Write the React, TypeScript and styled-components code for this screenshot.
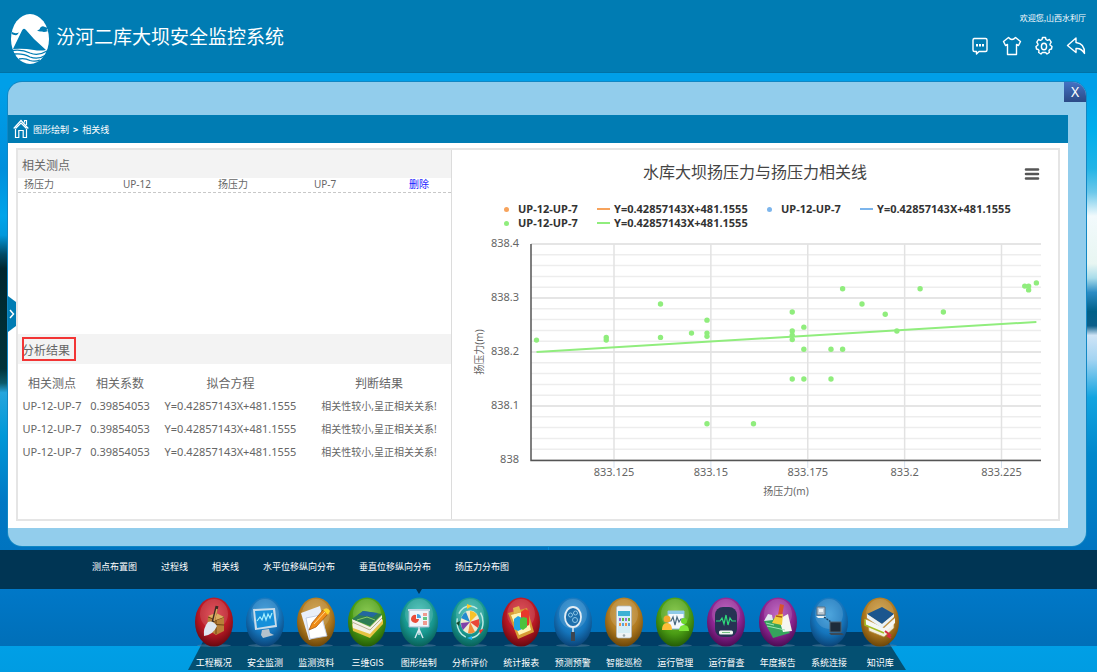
import React from "react";
import styled, { createGlobalStyle } from "styled-components";

const latin = '"Noto Sans", "Noto Sans CJK SC", sans-serif';
const cjk = '"Noto Sans CJK SC", "Noto Sans", sans-serif';

const GlobalStyle = createGlobalStyle`
  * { box-sizing: border-box; }
  body { margin: 0; font-family: ${cjk}; color: #666; background: #0075c2; }
  button { padding: 0; border: 0; background: none; font: inherit; color: inherit; cursor: pointer; }
  a { color: inherit; text-decoration: none; }
  h1, h2, p { margin: 0; font-weight: 400; }
  svg { display: block; }
`;

const Page = styled.div`
  min-height: 100vh;
  display: flex;
  flex-direction: column;
`;

/* ---------- header ---------- */

const Header = styled.header`
  height: 73px;
  padding: 12px 11px 8px 10px;
  display: flex;
  justify-content: space-between;
  background: #007cb3;
  border-bottom: 1px solid #0072a6;
  color: #fff;
`;

const Brand = styled.div`
  display: flex;
  align-items: flex-start;
  gap: 6px;
`;

const SystemName = styled.h1`
  font-size: 19px;
  line-height: 48px;
`;

const UserArea = styled.div`
  display: flex;
  flex-direction: column;
  align-items: flex-end;
  gap: 12px;
`;

const Welcome = styled.p`
  font-size: 8px;
  line-height: 12px;
`;

const Tools = styled.div`
  display: flex;
  gap: 12px;
`;

const ToolButton = styled.button`
  width: 20px;
  height: 20px;
`;

/* ---------- window ---------- */

const Stage = styled.main`
  flex: 1;
  display: flex;
  padding: 9px 11px 4px 8px;
  background:
    linear-gradient(#009fe8 0, #009fe8 3%, #008fdc 20%, #00a4ea 30%, #0098dc 34%, #004a66 38%, #00262e 41%, #00333a 62%, #0b5a6a 65%, #25a5dd 67%, #0098d8 76%, #0078c4 90%, #0074c0 100%) left / 50% 100% no-repeat,
    linear-gradient(#009fe8 0, #009fe8 3%, #00aeec 12%, #22b4e6 20%, #6cc8ea 25%, #f2fafc 30%, #e8f6f2 40%, #a8dcea 43%, #2b8cc4 46%, #006088 50%, #0b5f8a 53%, #cfe4f6 55%, #a4d4f2 60%, #12a4e0 68%, #0088cc 80%, #0074c0 100%) right / 50% 100% no-repeat,
    #009fe8;
`;

const Window = styled.section`
  flex: 1;
  display: flex;
  flex-direction: column;
  padding: 0 18px 18px 0;
  border-radius: 14px;
  background: #92cdec;
  box-shadow: 0 0 0 1px #1187c4;
  position: relative;
`;

const TitleBar = styled.div`
  height: 33px;
`;

const CloseButton = styled.button`
  position: absolute;
  top: 0;
  right: 0;
  width: 22px;
  height: 20px;
  border-radius: 0 14px 0 0;
  background: linear-gradient(#4472c4, #2b4a86);
  color: #fff;
  font-family: ${latin};
  font-size: 14px;
  line-height: 20px;
`;

const Crumbs = styled.nav`
  height: 28px;
  padding-left: 5px;
  display: flex;
  align-items: center;
  gap: 4px;
  background: #007cb3;
  color: #fff;
  font-size: 9px;
`;

const Separator = styled.span`
  font-weight: 700;
`;

const Body = styled.div`
  flex: 1;
  display: flex;
  padding: 5px 8px 7px;
  background: #fff;
  position: relative;
`;

const DrawerHandle = styled.button`
  position: absolute;
  left: 0;
  top: 153px;
  width: 8px;
  height: 36px;
`;

const Frame = styled.div`
  flex: 1;
  display: grid;
  grid-template-columns: 434fr 606fr;
  border: 2px solid #e5e5e5;
`;

const ListPanel = styled.div`
  display: flex;
  flex-direction: column;
  border-right: 1px solid #dcdcdc;
`;

const PanelHead = styled.h2<{ $tall?: boolean }>`
  height: ${(p) => (p.$tall ? 30 : 28)}px;
  padding: 0 4px;
  display: flex;
  align-items: center;
  background: #f3f3f3;
  font-size: 12px;
`;

const Marked = styled.span`
  height: 24px;
  padding-right: 6px;
  display: flex;
  align-items: center;
  outline: 2px solid #f23535;
  outline-offset: -2px;
`;

const PointRow = styled.div`
  display: grid;
  grid-template-columns: 99px 95px 96px 95px 1fr;
  padding-left: 6px;
  height: 15px;
  border-bottom: 1px dashed #c8c8c8;
  font-family: ${latin};
  font-size: 10px;
  line-height: 12px;
`;

const DeleteButton = styled.button`
  justify-self: start;
  height: 12px;
  color: #1a1aff;
`;

const Spacer = styled.div`
  flex: 1;
`;

const ResultArea = styled.div`
  height: 155px;
  padding-top: 8px;
`;

const ResultTable = styled.table`
  width: 100%;
  border-collapse: collapse;
  table-layout: fixed;
  text-align: center;
  font-family: ${latin};
  th, td { padding: 0; white-space: nowrap; }
  th { height: 22px; font-size: 12px; font-weight: 400; }
  td { height: 23px; font-size: 10px; line-height: 18px; }
  td:nth-child(-n + 3) { font-size: 11px; }
`;

/* ---------- chart ---------- */

const ChartPanel = styled.div`
  display: flex;
  flex-direction: column;
`;

const ChartHead = styled.div`
  display: grid;
  grid-template-columns: 1fr auto 1fr;
  align-items: center;
  padding: 9px 18px 0;
  line-height: 24px;
`;

const ChartTitle = styled.h2`
  grid-column: 2;
  font-size: 16px;
  color: #444;
`;

const MenuButton = styled.button`
  justify-self: end;
  padding-top: 6px;
`;

const Legend = styled.div`
  display: grid;
  grid-template-columns: 93px 170px 93px 1fr;
  padding: 19px 0 2px 52px;
`;

const LegendItem = styled.button<{ $line?: boolean }>`
  display: grid;
  grid-template-columns: ${(p) => (p.$line ? 17 : 14)}px auto;
  align-items: center;
  justify-content: start;
  height: 14px;
  color: #333;
  font-family: ${latin};
  font-size: 11px;
  font-weight: 700;
  line-height: 14px;
  white-space: nowrap;
`;

const Swatch = styled.span<{ $color: string; $line?: boolean }>`
  width: ${(p) => (p.$line ? 13 : 5)}px;
  height: ${(p) => (p.$line ? 2 : 5)}px;
  border-radius: ${(p) => (p.$line ? 0 : 3)}px;
  background: ${(p) => p.$color};
`;

const Plot = styled.svg`
  width: 100%;
  height: auto;
  font-family: ${latin};
  font-size: 11px;
  fill: #666;
`;

/* ---------- bottom ---------- */

const SubMenu = styled.nav`
  height: 39px;
  padding: 10px 0 0 92px;
  display: flex;
  gap: 24px;
  background: #003554;
  color: #fff;
  font-size: 9px;
  line-height: 14px;
  white-space: nowrap;
`;

const Dock = styled.footer`
  height: 83px;
  padding-right: 3px;
  background: linear-gradient(#0078c8, #006fb8 57px, #009fe6 57px, #009ce2 100%);
`;

const DockList = styled.nav`
  position: relative;
  width: 718px;
  max-width: 100%;
  height: 83px;
  margin: 0 auto;
  display: grid;
  grid-template-columns: repeat(14, 1fr);
`;

const DockShelf = styled.div`
  position: absolute;
  inset: 43px 0 2px;
  clip-path: polygon(20px 0, calc(100% - 24px) 0, 100% 100%, 0 100%);
  background: linear-gradient(#003d66 14px, #045072 14px);
`;

const DockItem = styled.a`
  position: relative;
  display: flex;
  flex-direction: column;
  align-items: center;
  gap: 9px;
  padding-top: 8px;
  color: #fff;
  font-size: 9px;
  line-height: 14px;
  white-space: nowrap;
`;

const ActiveMark = styled.span`
  position: absolute;
  top: 0;
  left: 50%;
  margin-left: -3px;
  border: 3px solid transparent;
  border-top: 5px solid #003554;
  border-bottom: 0;
`;

/* ---------- drawings ---------- */

const Logo = () => (
  <svg width="40" height="52" viewBox="0 0 40 52">
    <ellipse cx="20" cy="27" rx="19" ry="25" fill="#fff" />
    <path d="M3 37 L12 18.500 Q13.500 15.500 16 18 L24 27 L36 38 Q30 39 24 38 Q13 36 3 37Z" fill="#007cb3" />
    <path d="M2 20 Q5 22 9 20.500 L7 23 Q4 23.500 1.500 22Z M27 18 Q30 18 30 16 Q32 13 35 15 L38 16 L36.500 18 L38 19 Q34 20.500 32 19.500 Q29 20 27 18Z" fill="#007cb3" />
    <path d="M2 38.500 Q12 37 20 41 Q28 44.500 37 39 M4 42 Q13 41 20 45 Q28 48 35 43.500 M9 47 Q15 46 20 48.500 Q25 50 30 48" fill="none" stroke="#007cb3" strokeWidth="1.300" />
  </svg>
);

const stroke = { fill: "none", stroke: "#fff", strokeWidth: 1.4, strokeLinejoin: "round" as const };

const toolIcons: { label: string; art: React.ReactNode }[] = [
  {
    label: "消息",
    art: (
      <>
        <path {...stroke} d="M4 2.500H15.500Q17 2.500 17 4V14Q17 15.500 15.500 15.500H9L6.500 18V15.500H4.500Q3 15.500 3 14V4Q3 2.500 4.500 2.500Z" />
        <path d="M6 8h2v2.500H6zM9 8h2v2.500H9zM12 8h2v2.500H12z" fill="#fff" />
      </>
    ),
  },
  { label: "换肤", art: <path {...stroke} d="M6.500 1.500Q10 5.500 13.500 1.500L18.500 5.500L16.500 9.500L14.500 8.500V18.500H5.500V8.500L3.500 9.500L1.500 5.500Z" /> },
  {
    label: "设置",
    art: (
      <>
        <path {...stroke} d="M8.500 1.500H11.500L12 3.500L13.500 4.300L15.500 3.500L17.200 6.200L16 8.200V9L18 10.500L17.500 13L15.800 13.500L15 14.500L15.300 16.500L13 18L11.600 16.500H8.400L7 18L4.700 16.500L5 14.500L4.200 13.500L2.500 13L2 10.500L4 9V8.200L2.800 6.200L4.500 3.500L6.500 4.300L8 3.500Z" />
        <ellipse {...stroke} cx="10" cy="10.500" rx="2.600" ry="3.300" />
      </>
    ),
  },
  { label: "返回", art: <path {...stroke} d="M10 2L1.500 9.500L10 16.500V12.500Q15.500 12 18.500 17.500Q19 7.500 10 6.500Z" /> },
];

const HomeIcon = () => (
  <svg width="16" height="20" viewBox="0 0 16 20" fill="none" stroke="#fff" strokeWidth="1.200">
    <path d="M0.700 9.500L8 1.500L15.300 9.500M2.500 9.500L8 4L13.500 9.500M2.500 10V18.500H5.800V11.500H10.200V18.500H13.500V10M11.500 3.500V1.500H13.500V6" />
  </svg>
);

type Hue = "red" | "blue" | "gold" | "green" | "teal" | "purple";

const hues: Record<Hue, [string, string, string]> = {
  red: ["#dc3c46", "#b81824", "#680810"],
  blue: ["#3498d8", "#1575bc", "#0a4478"],
  gold: ["#d0a044", "#b07a20", "#6c4608"],
  green: ["#7cc43a", "#4a9c14", "#245c06"],
  teal: ["#44c4b8", "#189890", "#086058"],
  purple: ["#b854bc", "#8c2490", "#4c0c54"],
};

const Gradients = () => (
  <svg width="0" height="0" aria-hidden="true">
    <defs>
      {(Object.keys(hues) as Hue[]).map((h) => (
        <radialGradient key={h} id={`orb-${h}`} cx="50%" cy="35%" r="65%">
          <stop offset="0" stopColor={hues[h][0]} />
          <stop offset="0.600" stopColor={hues[h][1]} />
          <stop offset="1" stopColor={hues[h][2]} />
        </radialGradient>
      ))}
    </defs>
  </svg>
);

const HiddenDefs = styled.div`
  height: 0;
  overflow: hidden;
`;

const Orb = ({ hue, children }: { hue: Hue; children: React.ReactNode }) => (
  <svg width="40" height="50" viewBox="0 0 40 50">
    <ellipse cx="20" cy="48.500" rx="17" ry="1.500" fill="#5b86a4" opacity="0.500" />
    <ellipse cx="20" cy="25" rx="19" ry="24.500" fill={`url(#orb-${hue})`} />
    <ellipse cx="20" cy="17" rx="14" ry="15" fill="#fff" opacity="0.130" />
    {children}
  </svg>
);

const dockItems: { label: string; hue: Hue; active?: boolean; art: React.ReactNode }[] = [
  {
    label: "工程概况",
    hue: "red",
    art: (
      <>
        <path d="M14 20L22 16L30 20V34L22 38L13 32Z" fill="#b98038" />
        <path d="M14 20L22 23L30 20M22 23V37M14 27L30 28" stroke="#6f4212" fill="none" />
        <path d="M14 19L22 16L30 20L22 23Z" fill="#dcae62" />
        <path d="M23 9L19 25" stroke="#3b2a22" strokeWidth="3" />
        <path d="M23 12L20 24" stroke="#d9a45c" strokeWidth="1.500" />
        <path d="M14 25Q19 23 23 29Q19 38 10 39Q9 31 14 25Z" fill="#dfe6ef" />
      </>
    ),
  },
  {
    label: "安全监测",
    hue: "blue",
    art: (
      <>
        <path d="M8 12L30 11L32 30L10 33Z" fill="#c9dcea" />
        <path d="M10 14L28 13L30 28L12 31Z" fill="#1590da" />
        <path d="M12 24L15 20L17 23L19 17L21 23L23 17L25 21L27 16" stroke="#a5f0ff" fill="none" strokeWidth="1.200" />
        <path d="M17 33L24 32L25 36L29 38L18 41L16 38Z" fill="#b5c2cc" />
      </>
    ),
  },
  {
    label: "监测资料",
    hue: "gold",
    art: (
      <>
        <path d="M5 16L24 9L30 36L13 43Z" fill="#e9effa" />
        <path d="M10 21L25 18L31 39L14 42Z" fill="#fff" stroke="#b8c4dd" strokeWidth="0.800" />
        <path d="M16 26L27 13L32 17L20 30L13 33Z" fill="#f08c18" stroke="#9c5008" strokeWidth="0.700" />
        <path d="M27 13Q31 9 34 14L32 18Z" fill="#ffd628" />
        <path d="M18 27L29 15" stroke="#ffd88c" />
      </>
    ),
  },
  {
    label: "三维GIS",
    hue: "green",
    art: (
      <>
        <path d="M5 27L25 34L36 22V27L23 41L6 34Z" fill="#e6c344" />
        <path d="M5 22L23 30L35 18V24L23 37L6 31Z" fill="#f3f0e4" />
        <path d="M5 25L23 33L35 21" stroke="#b6b08e" fill="none" />
        <path d="M5 22L16 14L35 17L23 29Z" fill="#2c7c54" />
        <path d="M11 18L16 14L31 16L26 20Z" fill="#2367a0" />
        <path d="M10 23L20 20L28 23" stroke="#8ecb62" fill="none" />
      </>
    ),
  },
  {
    label: "图形绘制",
    hue: "teal",
    active: true,
    art: (
      <>
        <path d="M10 13H30V30H10Z" fill="#eef5fb" stroke="#9db8cc" />
        <path d="M9 12H31V14H9Z" fill="#c7d9e6" />
        <path d="M17 18A4 4 0 1 0 20 22H17Z" fill="#ea4c38" />
        <path d="M18 17A4 4 0 0 1 22 21H18Z" fill="#49a3dd" />
        <path d="M24 16H28V19H24ZM24 24H28V28H24Z" fill="#ef9a90" />
        <path d="M24 20H28V23H24Z" fill="#62c682" />
        <path d="M20 30V38M20 32L16 41M20 32L24 41" stroke="#d8e8ef" strokeWidth="1.400" />
      </>
    ),
  },
  {
    label: "分析评价",
    hue: "teal",
    art: (
      <>
        <ellipse cx="20" cy="25" rx="13" ry="16" fill="none" stroke="#bce9e4" strokeWidth="1.500" strokeDasharray="22 5" />
        <ellipse cx="20" cy="25" rx="9.500" ry="11.500" fill="#f2ead0" />
        <path d="M20 25L20 14A9 11 0 0 1 27 18Z" fill="#f7c22a" />
        <path d="M20 25L29 22A9 11 0 0 1 28 31Z" fill="#ea4738" />
        <path d="M20 25L25 35A9 11 0 0 1 18 36Z" fill="#f28d35" />
        <path d="M20 25L13 33A9 11 0 0 1 11 26Z" fill="#8140aa" />
        <path d="M20 25L11 21A9 11 0 0 1 16 15Z" fill="#238bd0" />
        <path d="M17 7L22 9L17 12Z" fill="#ffc92a" />
        <path d="M34 32L30 37L29 33Z" fill="#ed382c" />
        <path d="M22 43L17 41L22 39Z" fill="#25b3f0" />
        <path d="M6 26L9 29L10 24Z" fill="#164c2e" />
      </>
    ),
  },
  {
    label: "统计报表",
    hue: "red",
    art: (
      <>
        <path d="M7 16L26 11L33 35L17 42Z" fill="#d79c34" />
        <path d="M10 18L25 14L30 33L18 38Z" fill="#fff4b4" />
        <path d="M12 11L18 9L20 15L13 17Z" fill="#e2b84c" />
        <path d="M20 15L24 12L28 14V28L24 30L20 28Z" fill="#e8382c" />
        <path d="M13 22L17 19L21 21V32L17 34L13 32Z" fill="#24a4e2" />
        <path d="M19 22L22 20L26 21V30L22 33L19 31Z" fill="#4cc23c" />
      </>
    ),
  },
  {
    label: "预测预警",
    hue: "blue",
    art: (
      <>
        <ellipse cx="20" cy="20" rx="8" ry="10" fill="#1d6fac" stroke="#e3edf4" strokeWidth="1.800" />
        <circle cx="17.500" cy="18" r="2" fill="none" stroke="#8cc6e6" />
        <circle cx="22.500" cy="16" r="2" fill="none" stroke="#8cc6e6" />
        <circle cx="22" cy="23" r="2.500" fill="none" stroke="#8cc6e6" />
        <path d="M20 30V35" stroke="#dfe8ee" strokeWidth="1.500" />
        <path d="M20 35V44" stroke="#3d4650" strokeWidth="4" />
      </>
    ),
  },
  {
    label: "智能巡检",
    hue: "gold",
    art: (
      <>
        <rect x="12.500" y="9" width="15" height="32" rx="2" fill="#eef3f6" stroke="#aeb8bd" strokeWidth="0.700" />
        <path d="M14 14H26V36H14Z" fill="#d5eef6" />
        <path d="M14 14H26V19H14Z" fill="#3db1d4" />
        <path d="M15 21H17V24H15ZM21 21H23V24H21Z" fill="#9a6ad8" />
        <path d="M18 21H20V24H18ZM24 21H26V24H24Z" fill="#60b848" />
        <path d="M15 26H17V29H15ZM21 26H23V29H21Z" fill="#f09048" />
        <path d="M18 26H20V29H18ZM24 26H26V29H24Z" fill="#58a4e0" />
        <circle cx="20" cy="38.500" r="1.300" fill="#9da9af" />
      </>
    ),
  },
  {
    label: "运行管理",
    hue: "green",
    art: (
      <>
        <path d="M13 14H29V32H13Z" fill="#f3f9fd" stroke="#92bdd8" />
        <path d="M13 14H29V17H13Z" fill="#8ecae8" />
        <path d="M14 24H16L18 20L20 28L22 20L24 25L26 22H28" fill="none" stroke="#4c6b80" strokeWidth="1.200" />
        <circle cx="12" cy="22" r="3.500" fill="#f4a92c" />
        <path d="M7 33Q7 26 12 26Q17 26 17 33Z" fill="#ffbe38" />
        <circle cx="29" cy="24" r="3" fill="#6cd72c" />
        <path d="M24 34Q24 28 29 28Q34 28 34 34Z" fill="#7fe63a" />
      </>
    ),
  },
  {
    label: "运行督查",
    hue: "purple",
    art: (
      <>
        <rect x="9" y="10" width="22" height="30" rx="8" fill="#263354" />
        <path d="M10 24H14L16 21L18 27L20 18L22 28L24 21L26 24H30" fill="none" stroke="#2fdc7c" strokeWidth="1.200" />
        <rect x="13" y="33.500" width="14" height="4" rx="1.500" fill="#eef7ef" />
        <path d="M16 35.500H24" stroke="#74bf82" />
      </>
    ),
  },
  {
    label: "年度报告",
    hue: "purple",
    art: (
      <>
        <path d="M6 24L22 20L32 36L15 41Z" fill="#35a45c" />
        <path d="M6 24L10 17L14 18L15 23Z" fill="#e4e9ee" />
        <path d="M21 22L30 17L34 34L25 35Z" fill="#f6f6f0" />
        <path d="M22 7L26 8L24 19L20 18Z" fill="#d8542c" />
        <path d="M18 18L25 17L24 28L14 26Z" fill="#f2ce3c" />
        <path d="M18 19L24 20" stroke="#a85a18" strokeWidth="1.500" />
        <path d="M9 29L27 33M8 26L16 28" stroke="#a1e4b4" />
      </>
    ),
  },
  {
    label: "系统连接",
    hue: "blue",
    art: (
      <>
        <path d="M8 10H16V18H8Z" fill="#b9c7d1" stroke="#5e7282" />
        <path d="M10 12H14V15H10ZM7 19H17L15 21H9Z" fill="#e8f1f5" />
        <path d="M15 20L22 25" stroke="#174164" strokeWidth="1.400" strokeDasharray="2 1" />
        <path d="M21 25H32V35H21Z" fill="#1d2c3b" stroke="#4e6070" />
        <path d="M20 36H33L35 38H22Z" fill="#394957" />
      </>
    ),
  },
  {
    label: "知识库",
    hue: "gold",
    art: (
      <>
        <path d="M8 27L24 34L34 25V31L24 40L9 34Z" fill="#f4efde" stroke="#b08e3e" strokeWidth="0.700" />
        <path d="M5 22L24 31L35 21V26L24 36L6 28Z" fill="#f5f7f4" />
        <path d="M5 22V28L24 36" stroke="#a4bd24" strokeWidth="1.500" fill="none" />
        <path d="M7 17L22 10L34 17L22 27Z" fill="#1b568e" />
        <path d="M7 17V21L22 31L34 20V17L22 27Z" fill="#e9f2f8" />
        <path d="M25 34L30 38L28 39L31 41" stroke="#d62c42" strokeWidth="2" fill="none" />
      </>
    ),
  },
];

/* ---------- chart data ---------- */

const GREEN = "#90ed7d";
const ORANGE = "#f7a35c";
const BLUE = "#7cb5ec";
const POINT = "UP-12-UP-7";
const EQUATION = "Y=0.42857143X+481.1555";

const legend = [
  { text: POINT, color: ORANGE, line: false },
  { text: EQUATION, color: ORANGE, line: true },
  { text: POINT, color: BLUE, line: false },
  { text: EQUATION, color: BLUE, line: true },
  { text: POINT, color: GREEN, line: false },
  { text: EQUATION, color: GREEN, line: true },
];

/* thousandths above 833 and above 838 */
const samples: [number, number][] = [
  [105, 222], [123, 227], [123, 222], [137, 289], [137, 227], [145, 235], [149, 259], [149, 235], [149, 229],
  [149, 67], [161, 67], [171, 274], [171, 239], [171, 231], [171, 223], [171, 150], [174, 246], [174, 205],
  [174, 150], [181, 205], [181, 150], [184, 317], [184, 205], [189, 289], [195, 270], [198, 239], [204, 317],
  [210, 274], [231, 322], [232, 322], [232, 315], [234, 328],
];

const sx = (v: number) => 162 + (v - 125) * 3.875;
const sy = (v: number) => 228 - v * 0.54;

const ScatterChart = () => (
  <Plot viewBox="0 0 606 286" role="img" aria-label="扬压力相关线">
    {Array.from({ length: 21 }, (_, i) => i * 20).map((v) => (
      <line key={v} x1="79" x2="589" y1={sy(v)} y2={sy(v)} stroke={v % 100 ? "#ededed" : "#dcdcdc"} strokeWidth="1.500" />
    ))}
    {[125, 150, 175, 200, 225].map((v) => (
      <g key={v}>
        <line x1={sx(v)} x2={sx(v)} y1="12" y2="228" stroke="#e2e2e2" strokeWidth="1.500" />
        <line x1={sx(v)} x2={sx(v)} y1="229" y2="236" stroke="#d5e0ee" />
        <text x={sx(v)} y="244" textAnchor="middle">{833 + v / 1000}</text>
      </g>
    ))}
    {[0, 100, 200, 300, 400].map((v) => (
      <text key={v} x="67" y={sy(v) + 3} textAnchor="end">{838 + v / 1000}</text>
    ))}
    <path d="M79 12V228.500H589" fill="none" stroke="#555" strokeWidth="1.500" />
    <line x1={sx(105)} y1="120" x2={sx(234)} y2="90" stroke={GREEN} strokeWidth="2" />
    {samples.map(([x, y], i) => (
      <circle key={i} cx={sx(x)} cy={sy(y)} r="2.700" fill={GREEN} />
    ))}
    <text x="334" y="263" textAnchor="middle" fontSize="10">扬压力(m)</text>
    <text transform="translate(31 120) rotate(-90)" textAnchor="middle" fontSize="10">扬压力(m)</text>
  </Plot>
);

const subMenu = ["测点布置图", "过程线", "相关线", "水平位移纵向分布", "垂直位移纵向分布", "扬压力分布图"];

export default function App() {
  return (
    <Page>
      <GlobalStyle />
      <HiddenDefs><Gradients /></HiddenDefs>
      <Header>
        <Brand>
          <Logo />
          <SystemName>汾河二库大坝安全监控系统</SystemName>
        </Brand>
        <UserArea>
          <Welcome>欢迎您,山西水利厅</Welcome>
          <Tools>
            {toolIcons.map((t) => (
              <ToolButton key={t.label} aria-label={t.label}>
                <svg width="20" height="20" viewBox="0 0 20 20">{t.art}</svg>
              </ToolButton>
            ))}
          </Tools>
        </UserArea>
      </Header>

      <Stage>
        <Window>
          <TitleBar />
          <CloseButton aria-label="关闭">X</CloseButton>
          <Crumbs>
            <HomeIcon />
            <a href="#draw">图形绘制</a>
            <Separator>&gt;</Separator>
            <a href="#line">相关线</a>
          </Crumbs>
          <Body>
            <Frame>
              <ListPanel>
                <PanelHead>相关测点</PanelHead>
                <PointRow>
                  <span>扬压力</span>
                  <span>UP-12</span>
                  <span>扬压力</span>
                  <span>UP-7</span>
                  <DeleteButton>删除</DeleteButton>
                </PointRow>
                <Spacer />
                <PanelHead $tall><Marked>分析结果</Marked></PanelHead>
                <ResultArea>
                  <ResultTable>
                    <colgroup>
                      <col width="68" />
                      <col width="68" />
                      <col width="153" />
                      <col />
                    </colgroup>
                    <thead>
                      <tr><th>相关测点</th><th>相关系数</th><th>拟合方程</th><th>判断结果</th></tr>
                    </thead>
                    <tbody>
                      {[0, 1, 2].map((i) => (
                        <tr key={i}>
                          <td>{POINT}</td>
                          <td>0.39854053</td>
                          <td>{EQUATION}</td>
                          <td>相关性较小,呈正相关关系!</td>
                        </tr>
                      ))}
                    </tbody>
                  </ResultTable>
                </ResultArea>
              </ListPanel>
              <ChartPanel>
                <ChartHead>
                  <ChartTitle>水库大坝扬压力与扬压力相关线</ChartTitle>
                  <MenuButton aria-label="菜单">
                    <svg width="16" height="14" viewBox="0 0 16 14" stroke="#555" strokeWidth="2.600" strokeLinecap="round">
                      <path d="M2 2.500H14M2 7H14M2 11.500H14" />
                    </svg>
                  </MenuButton>
                </ChartHead>
                <Legend>
                  {legend.map((l, i) => (
                    <LegendItem key={i} $line={l.line}>
                      <Swatch $color={l.color} $line={l.line} />
                      {l.text}
                    </LegendItem>
                  ))}
                </Legend>
                <ScatterChart />
              </ChartPanel>
            </Frame>
            <DrawerHandle aria-label="展开">
              <svg width="8" height="36" viewBox="0 0 8 36">
                <path d="M0 0L8 6V30L0 36Z" fill="#007cb3" />
                <path d="M2 14L5.500 18L2 22" fill="none" stroke="#fff" strokeWidth="1.500" />
              </svg>
            </DrawerHandle>
          </Body>
        </Window>
      </Stage>

      <SubMenu>
        {subMenu.map((s) => (
          <a key={s} href={`#${s}`}>{s}</a>
        ))}
      </SubMenu>
      <Dock>
        <DockList>
          <DockShelf />
          {dockItems.map((d) => (
            <DockItem key={d.label} href={`#${d.label}`}>
              {d.active && <ActiveMark />}
              <Orb hue={d.hue}>{d.art}</Orb>
              {d.label}
            </DockItem>
          ))}
        </DockList>
      </Dock>
    </Page>
  );
}
